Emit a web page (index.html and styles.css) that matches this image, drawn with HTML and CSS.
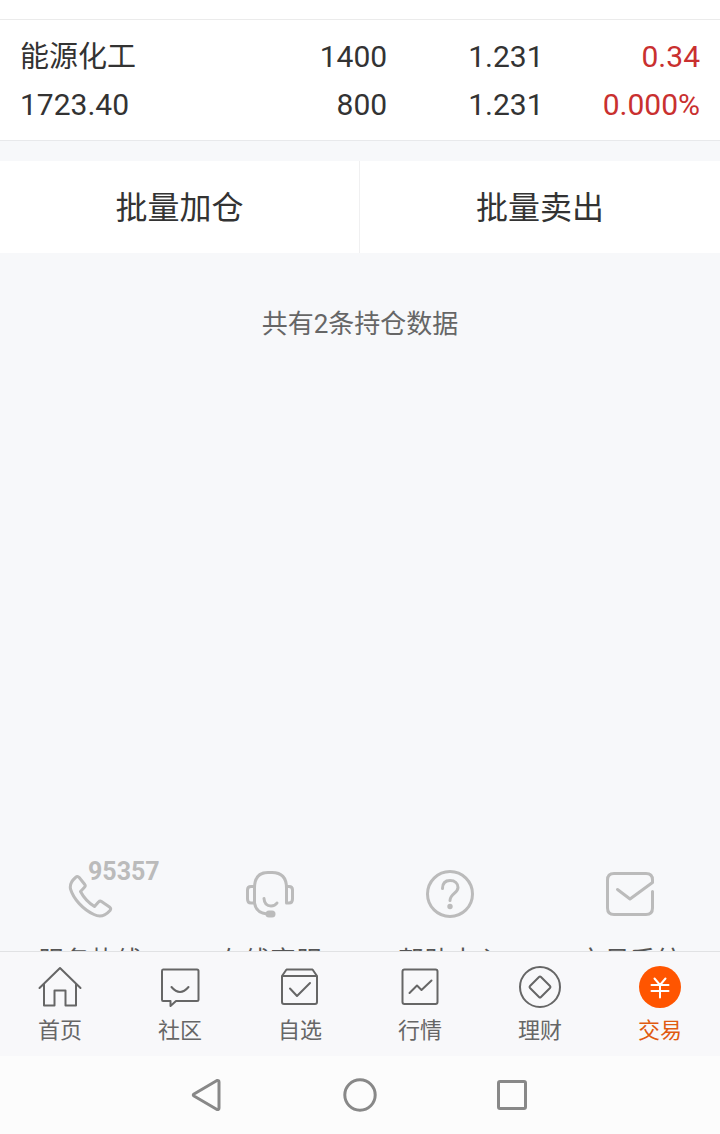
FILE: index.html
```
<!DOCTYPE html>
<html lang="zh-CN">
<head>
    <meta charset="UTF-8">
    <meta name="viewport" content="width=device-width, initial-scale=1.0">
    <title>持仓</title>
    <link rel="stylesheet" href="styles.css">
</head>
<body>
    <main class="content">
        <section class="holdings">
            <table class="holdings-table">
                <tbody>
                    <tr>
                        <td class="col-name"><span class="name">能源化工</span><span>1723.40</span></td>
                        <td class="col-amount"><span>1400</span><span>800</span></td>
                        <td class="col-price"><span>1.231</span><span>1.231</span></td>
                        <td class="col-profit"><span>0.34</span><span>0.000%</span></td>
                    </tr>
                </tbody>
            </table>
        </section>

        <div class="batch-actions">
            <button type="button" class="batch-btn">批量加仓</button>
            <button type="button" class="batch-btn">批量卖出</button>
        </div>

        <p class="count">共有2条持仓数据</p>

        <nav class="services">
            <a href="#" class="service">
                <span class="service-icon">
                    <svg viewBox="0 0 48 48">
                        <path d="M9.5 7.5Q11.5 5.5 13.2 7.5L18.800 14.500Q19.800 16 18.500 17.300L14.500 21.500Q19.500 31 28.500 36.500L32.500 32Q34 30.500 35.500 31.500L43.500 37Q45.500 38.500 44 40.500C40 45 35 48 28 44.500C17 39.500 7.500 29 4.500 19C3.500 14 6 10.500 9.500 7.500Z"/>
                    </svg>
                    <span class="hotline">95357</span>
                </span>
                <span class="service-label">服务热线</span>
            </a>
            <a href="#" class="service">
                <span class="service-icon">
                    <svg viewBox="0 0 48 48">
                        <path d="M8.500 33V18Q8.500 2.500 22 2.500H26Q40.500 2.500 40.500 18V33H43Q46.500 33 46.500 29V20Q46.500 16.500 43 16.500H40.500M8.500 16.500H5Q1.500 16.500 1.500 20V29Q1.500 33 5 33H8.500Q10 43 21 44"/>
                        <path d="M18 28.500Q18.500 36 25 36Q29 36 31 33"/>
                        <rect class="solid" x="19.500" y="40.500" width="10" height="7" rx="3.500"/>
                    </svg>
                </span>
                <span class="service-label">在线客服</span>
            </a>
            <a href="#" class="service">
                <span class="service-icon">
                    <svg viewBox="0 0 48 48">
                        <circle cx="24" cy="24" r="22.500"/>
                        <path d="M16.500 18.500C16.500 13.500 19 10.500 24 10.500S32 13.500 32 17.500C32 23 24 24 24 30.500"/>
                        <circle class="solid" cx="24" cy="36.500" r="2.700"/>
                    </svg>
                </span>
                <span class="service-label">帮助中心</span>
            </a>
            <a href="#" class="service">
                <span class="service-icon">
                    <svg viewBox="0 0 48 48">
                        <path d="M11.500 19.500L24 29L46.500 12.500V10Q46.500 3.500 40 3.500H8Q1.500 3.500 1.500 10V38Q1.500 44.500 8 44.500H40Q46.500 44.500 46.500 38V21.500"/>
                    </svg>
                </span>
                <span class="service-label">交易系统</span>
            </a>
        </nav>
    </main>

    <nav class="tabbar">
        <a href="#" class="tab">
            <svg viewBox="0 0 44 44">
                <path d="M1.500 23L22 3L42.500 23M6 19.500V40.500H16.500V25.500H27.500V40.500H38V19.500"/>
            </svg>
            <span>首页</span>
        </a>
        <a href="#" class="tab">
            <svg viewBox="0 0 44 44">
                <path d="M5 4.500H39Q40.500 4.500 40.500 6V34.500Q40.500 36 39 36H18L12.500 41V36H5Q4 36 4 34.500V6Q4 4.500 5 4.500Z"/>
                <path d="M13.500 22Q22 32 30.500 22"/>
            </svg>
            <span>社区</span>
        </a>
        <a href="#" class="tab">
            <svg viewBox="0 0 44 44">
                <path d="M4 11L8.500 4.500H34.500L39 11V37Q39 39 37 39H6Q4 39 4 37V11ZM4 11H39"/>
                <path d="M12 23.500L19 31L32 18"/>
            </svg>
            <span>自选</span>
        </a>
        <a href="#" class="tab">
            <svg viewBox="0 0 44 44">
                <rect x="4.500" y="4.500" width="35" height="34.500" rx="2"/>
                <path d="M11.500 28L19 20.500L23.500 25L33.500 15.500"/>
            </svg>
            <span>行情</span>
        </a>
        <a href="#" class="tab">
            <svg viewBox="0 0 44 44">
                <circle cx="22" cy="22" r="20"/>
                <path d="M21 12L12 21Q11 22 12 23L21 32Q22 33 23 32L32 23Q33 22 32 21L23 12Q22 11 21 12Z"/>
            </svg>
            <span>理财</span>
        </a>
        <a href="#" class="tab active">
            <svg viewBox="0 0 44 44">
                <circle class="coin" cx="22" cy="22" r="21"/>
                <path class="yen" d="M16.500 13.500L22 20L27.500 13.500M13.500 20H30.500M13.500 26H30.500M22 20V32.500"/>
            </svg>
            <span>交易</span>
        </a>
    </nav>

    <div class="system-nav">
        <button type="button" aria-label="返回">
            <svg viewBox="0 0 36 36"><path d="M4 17L27 3.500Q29 3 29 5V31Q29 33 27 32.500L4 19Q2.500 18 4 17Z"/></svg>
        </button>
        <button type="button" aria-label="主屏幕">
            <svg viewBox="0 0 36 36"><circle cx="18" cy="18" r="15.200"/></svg>
        </button>
        <button type="button" aria-label="最近任务">
            <svg viewBox="0 0 36 36"><rect x="4.500" y="4.500" width="27" height="27" rx="1.500"/></svg>
        </button>
    </div>
</body>
</html>
```

FILE: styles.css
```
* {
    margin: 0;
    padding: 0;
    box-sizing: border-box;
}

body {
    font-family: Roboto, 'Noto Sans CJK SC', sans-serif;
    background: #f7f8fa;
    color: #333;
    height: 100vh;
    display: flex;
    flex-direction: column;
}

a {
    color: inherit;
    text-decoration: none;
}

button {
    font-family: inherit;
    color: inherit;
    background: none;
    border: none;
    cursor: pointer;
}

svg {
    display: block;
    fill: none;
    stroke: currentColor;
    stroke-linecap: round;
    stroke-linejoin: round;
}

.content {
    flex: 1;
    min-height: 0;
    overflow: hidden;
    display: flex;
    flex-direction: column;
}

/* Holdings */
.holdings {
    background: white;
    padding-top: 19px;
    border-bottom: 1px solid #e8e9eb;
}

.holdings-table {
    width: 100%;
    table-layout: fixed;
    border-collapse: separate;
    border-spacing: 0;
    border-top: 1px solid #ebebeb;
    padding: 13px 20px 11px;
}

.holdings-table td {
    font-size: 30px;
    line-height: 48px;
    text-align: right;
}

.holdings-table span {
    display: block;
    height: 48px;
}

.holdings-table .col-name {
    width: 30%;
    text-align: left;
}

.holdings-table .name {
    font-size: 29px;
}

.col-amount {
    width: 24%;
}

.col-price,
.col-profit {
    width: 23%;
}

.col-profit {
    color: #c9302f;
}

.batch-actions {
    display: flex;
    background: white;
    margin-top: 20px;
}

.batch-btn {
    width: 50%;
    height: 92px;
    padding-bottom: 4px;
    font-size: 32px;
}

.batch-btn:first-child {
    border-right: 1px solid #f0f0f1;
}

.count {
    margin-top: 51px;
    font-size: 26px;
    line-height: 40px;
    text-align: center;
    color: #666;
}

/* Service links, partly under the tab bar */
.services {
    display: flex;
    margin-top: auto;
    margin-bottom: -28px;
}

.service {
    flex: 1;
    display: flex;
    flex-direction: column;
    align-items: center;
    gap: 25px;
}

.service-icon {
    position: relative;
    width: 48px;
    height: 48px;
    color: #bbb;
}

.service-icon svg {
    width: 48px;
    height: 48px;
    stroke-width: 3;
}

.service-icon .solid {
    fill: currentColor;
    stroke: none;
}

.hotline {
    position: absolute;
    left: 22px;
    top: -12px;
    font-size: 25px;
    font-weight: 700;
    line-height: 28px;
}

.service-label {
    font-size: 26px;
    line-height: 36px;
    color: #555;
}

/* Tab bar */
.tabbar {
    display: flex;
    background: #f8f8fa;
    border-top: 1px solid #e1e2e4;
    padding: 13px 0 10px;
}

.tab {
    flex: 1;
    display: flex;
    flex-direction: column;
    align-items: center;
    gap: 7px;
    font-size: 22px;
    line-height: 30px;
    color: #666;
}

.tab svg {
    width: 44px;
    height: 44px;
    stroke-width: 2;
}

.tab.active {
    color: #e05a10;
}

.tab .coin {
    fill: #ff5500;
    stroke: none;
}

.tab .yen {
    stroke: white;
}

/* System navigation */
.system-nav {
    display: flex;
    justify-content: center;
    background: #fcfcfc;
    height: 78px;
}

.system-nav button {
    width: 152px;
    display: flex;
    align-items: center;
    justify-content: center;
    color: #888;
}

.system-nav svg {
    width: 36px;
    height: 36px;
    stroke-width: 3;
}
```
